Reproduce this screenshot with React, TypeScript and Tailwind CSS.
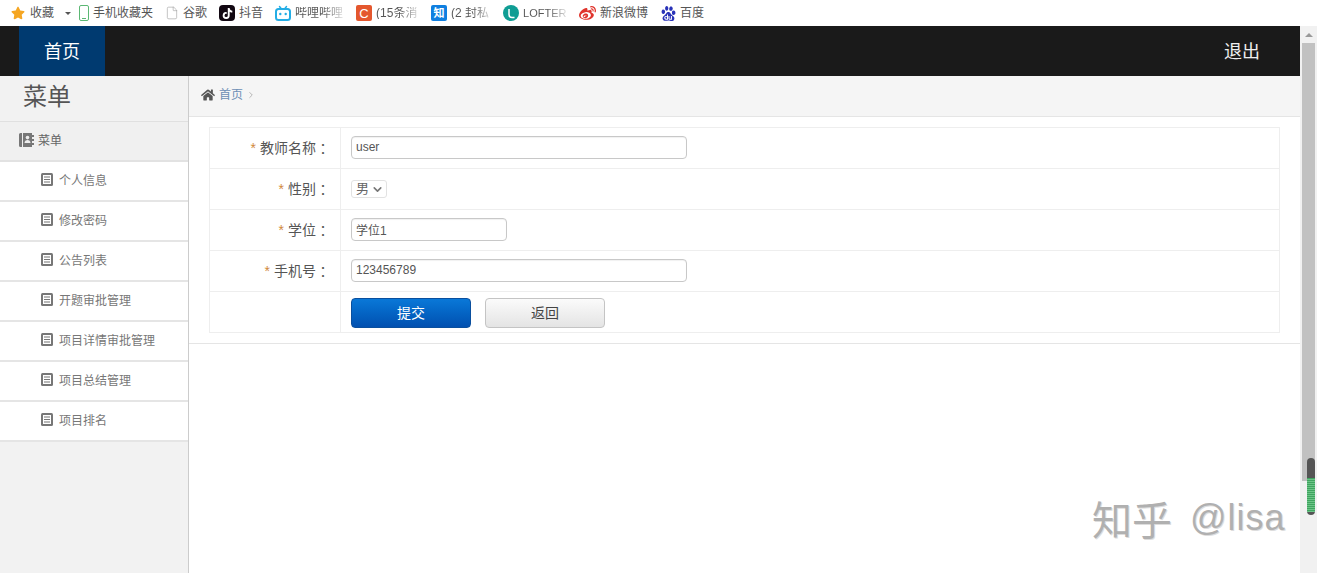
import React from 'react';
import { FaHome, FaStar, FaTiktok, FaWeibo } from 'react-icons/fa';
import { SiBaidu } from 'react-icons/si';
import { ChevronDown, ChevronRight, File } from 'lucide-react';

const ListIcon = () => (
  <svg width="12" height="13" viewBox="0 0 12 13" className="shrink-0">
    <rect width="12" height="13" rx="1.5" fill="#777" />
    <rect x="2" y="2" width="8" height="9" fill="#fff" />
    <path d="M3 4h6M3 6.5h6M3 9h6" stroke="#777" strokeWidth="1.2" />
  </svg>
);

const BookIcon = () => (
  <svg width="15" height="14" viewBox="0 0 15 14" className="shrink-0">
    <path d="M0 1.5A1.5 1.5 0 0 1 1.5 0H13v14H1.5A1.5 1.5 0 0 1 0 12.5Z" fill="#777" />
    <rect x="3" y="0" width="1" height="14" fill="#eee" />
    <circle cx="8.5" cy="4.6" r="1.8" fill="#eee" />
    <path d="M5.5 10c0-2 1.4-3 3-3s3 1 3 3Z" fill="#eee" />
    <path d="M13 2h2v2h-2zM13 6h2v2h-2zM13 10h2v2h-2z" fill="#777" />
  </svg>
);

const BiliIcon = () => (
  <svg width="16" height="16" viewBox="0 0 16 16">
    <path d="M4.5 1.5 6.5 4M11.5 1.5 9.5 4" stroke="#23ade5" strokeWidth="1.5" strokeLinecap="round" />
    <rect x="1" y="4" width="14" height="11" rx="2.5" fill="none" stroke="#23ade5" strokeWidth="2" />
    <circle cx="5.3" cy="9" r="1.2" fill="#23ade5" />
    <circle cx="10.7" cy="9" r="1.2" fill="#23ade5" />
  </svg>
);

const Fade = ({ width, children }: { width: string; children: React.ReactNode }) => (
  <span
    className={`${width} inline-block bg-gradient-to-r from-[#555] from-55% to-[#e4e4e4] bg-clip-text text-transparent`}
  >
    {children}
  </span>
);

const bookmarks: { icon: React.ReactNode; label: React.ReactNode }[] = [
  {
    icon: (
      <span className="flex w-[10px] h-4 items-end justify-center rounded-[2px] border-[1.5px] border-[#5cb874] pb-[1px]">
        <span className="w-1 h-[1px] bg-[#5cb874]" />
      </span>
    ),
    label: '手机收藏夹',
  },
  { icon: <File size={14} strokeWidth={1} className="text-[#999]" />, label: '谷歌' },
  {
    icon: (
      <span className="flex w-4 h-4 items-center justify-center rounded-[4px] bg-[#120812] text-white">
        <FaTiktok size={11} />
      </span>
    ),
    label: '抖音',
  },
  { icon: <BiliIcon />, label: <Fade width="w-[49px]">哔哩哔哩</Fade> },
  {
    icon: (
      <span className="flex w-4 h-4 items-center justify-center rounded-[2px] bg-[#e4572e] text-white text-[13px] leading-none">
        C
      </span>
    ),
    label: <Fade width="w-[43px]">(15条消</Fade>,
  },
  {
    icon: (
      <span className="flex w-4 h-4 items-center justify-center rounded-[2px] bg-[#0f7fe0] text-white text-[11px] leading-none font-bold">
        知
      </span>
    ),
    label: <Fade width="w-[40px]">(2 封私</Fade>,
  },
  {
    icon: (
      <span className="flex w-4 h-4 items-center justify-center rounded-full bg-[#0f9d94]">
        <svg width="10" height="11" viewBox="0 0 10 11">
          <path d="M3 1v5.5a3 3 0 0 0 3 3h2.5" fill="none" stroke="#fff" strokeWidth="1.5" />
        </svg>
      </span>
    ),
    label: <span className="inline-block w-[44px] text-[11px] bg-gradient-to-r from-[#555] from-55% to-[#e4e4e4] bg-clip-text text-transparent">LOFTER</span>,
  },
  { icon: <FaWeibo size={17} className="text-[#e0342c]" />, label: '新浪微博' },
  { icon: <SiBaidu size={15} className="text-[#2932b8] ml-[1px]" />, label: '百度' },
];

const menuItems = ['个人信息', '修改密码', '公告列表', '开题审批管理', '项目详情审批管理', '项目总结管理', '项目排名'];

const FormRow = ({ label, children }: { label?: string; children: React.ReactNode }) => (
  <div className="flex h-[41px] border-b border-[#eeeeee]">
    <div className="w-[131px] shrink-0 flex items-center justify-end pr-[10px] pb-[1px] border-r border-[#eeeeee] text-sm text-[#555]">
      {label && (
        <>
          <span className="text-[#d08a3c] mr-1">*</span>
          {label}
          <span className="font-['Noto_Sans_CJK_TC',sans-serif]">：</span>
        </>
      )}
    </div>
    <div className="flex flex-1 items-center pl-[10px]">{children}</div>
  </div>
);

const TextInput = ({ value, width }: { value: string; width: string }) => (
  <input
    defaultValue={value}
    className={`${width} h-[23px] -mt-[2px] px-1 rounded-[4px] border border-[#c8c8c8] bg-white text-xs text-[#555] shadow-[inset_0_1px_1px_rgba(0,0,0,0.06)] outline-none font-['Liberation_Sans','Noto_Sans_CJK_SC',sans-serif]`}
  />
);

export default function App() {
  return (
    <div className="relative flex flex-col w-[1317px] h-[573px] overflow-hidden bg-white font-['Liberation_Sans','Noto_Sans_CJK_SC',sans-serif]">
      {/* bookmarks bar */}
      <div className="flex items-center h-[26px] shrink-0 pl-[11px] text-xs text-[#555]">
        <FaStar size={14} className="text-[#f5a623]" />
        <span className="ml-[5px]">收藏</span>
        <span className="ml-[11px] mr-[8px] w-0 h-0 border-x-[3px] border-x-transparent border-t-[3px] border-t-[#555]" />
        {bookmarks.map((b, i) => (
          <div key={i} className="flex items-center gap-1 mr-3">
            {b.icon}
            <span className="leading-none whitespace-nowrap">{b.label}</span>
          </div>
        ))}
      </div>

      <div className="flex flex-1 min-h-0">
        <div className="flex flex-col flex-1 min-w-0">
          {/* header */}
          <header className="flex items-stretch justify-between h-[50px] shrink-0 bg-[#1a1a1a] pl-[19px] pr-10">
            <div className="flex w-[86px] items-center justify-center pt-[2px] bg-[#003a70] text-lg text-white">首页</div>
            <div className="flex items-center pt-[2px] text-lg text-[#eee]">退出</div>
          </header>

          <div className="flex flex-1 min-h-0">
            {/* sidebar */}
            <aside className="w-[189px] shrink-0 bg-[#f2f2f2] border-r border-[#cccccc]">
              <div className="h-[46px] pl-[23px] text-2xl leading-[42px] text-[#555] border-b border-[#e0e0e0]">菜单</div>
              <div className="flex items-center gap-1 h-10 pl-[19px] pb-[3px] text-xs text-[#666] bg-[#f0f0f0] border-b-2 border-[#e2e2e2]">
                <BookIcon />
                <span className="mt-[3px]">菜单</span>
              </div>
              {menuItems.map(item => (
                <div
                  key={item}
                  className="flex items-center gap-[6px] h-10 pl-[41px] text-xs text-[#777] bg-white border-b-2 border-[#e5e5e5]"
                >
                  <span className="-mt-[3px]"><ListIcon /></span>
                  <span>{item}</span>
                </div>
              ))}
            </aside>

            {/* main */}
            <main className="flex-1 min-w-0">
              <div className="flex items-center h-[41px] pl-3 pb-[2px] bg-[#f5f5f5] border-b border-[#e5e5e5] text-xs text-[#6d8fb5]">
                <FaHome size={14} className="text-[#555] mr-1" />
                <span>首页</span>
                <ChevronRight size={10} className="text-[#aaa] ml-[3px]" />
              </div>
              <div className="px-5 pt-[10px] pb-[10px] border-b border-[#e5e5e5]">
                <div className="border-x border-t border-[#eeeeee]">
                  <FormRow label="教师名称">
                    <TextInput value="user" width="w-[336px]" />
                  </FormRow>
                  <FormRow label="性别">
                    <div className="flex items-center h-[18px] w-9 pl-1 gap-[2px] rounded-[3px] border border-[#e2e2e2] text-[13px] text-[#666]">
                      男
                      <ChevronDown size={13} strokeWidth={3} className="text-[#777]" />
                    </div>
                  </FormRow>
                  <FormRow label="学位">
                    <TextInput value="学位1" width="w-[156px]" />
                  </FormRow>
                  <FormRow label="手机号">
                    <TextInput value="123456789" width="w-[336px]" />
                  </FormRow>
                  <FormRow>
                    <div className="flex gap-[14px] mt-[1px]">
                      <button className="w-[120px] h-[30px] rounded-[4px] border border-[#0a4f9e] bg-gradient-to-b from-[#0a78d8] to-[#0250b0] text-sm text-white">
                        提交
                      </button>
                      <button className="w-[120px] h-[30px] rounded-[4px] border border-[#c4c4c4] bg-gradient-to-b from-[#fbfbfb] to-[#e4e4e4] text-sm text-[#444]">
                        返回
                      </button>
                    </div>
                  </FormRow>
                </div>
              </div>
            </main>
          </div>
        </div>

        {/* browser scrollbar */}
        <div className="flex flex-col items-center w-[17px] shrink-0 bg-[#f1f1f1]">
          <div className="flex h-[17px] items-center justify-center">
            <span className="w-0 h-0 border-x-[4px] border-x-transparent border-b-[4px] border-b-[#999]" />
          </div>
          <div className="w-[13px] h-[438px] bg-[#c1c1c1]" />
        </div>
      </div>

      {/* scroll indicator over the scrollbar */}
      <div className="absolute left-[1307px] top-[458px] w-2 h-[57px] rounded-full overflow-hidden bg-[#555]">
        <div className="mt-5 h-[34px] bg-[repeating-linear-gradient(to_bottom,#3fa45f_0px,#3fa45f_1px,#6cc488_1px,#6cc488_2px)]" />
      </div>

      {/* watermark */}
      <div className="absolute left-[1092px] top-[498px] flex items-center gap-[18px] text-[#b0b0b0] leading-none whitespace-nowrap [text-shadow:1px_1px_0_#ddd]">
        <span className="text-[40px] font-['Noto_Sans_CJK_SC',sans-serif]">知乎</span>
        <span className="text-[36px] tracking-[1px] font-['Liberation_Sans',sans-serif]">@lisa</span>
      </div>
    </div>
  );
}
